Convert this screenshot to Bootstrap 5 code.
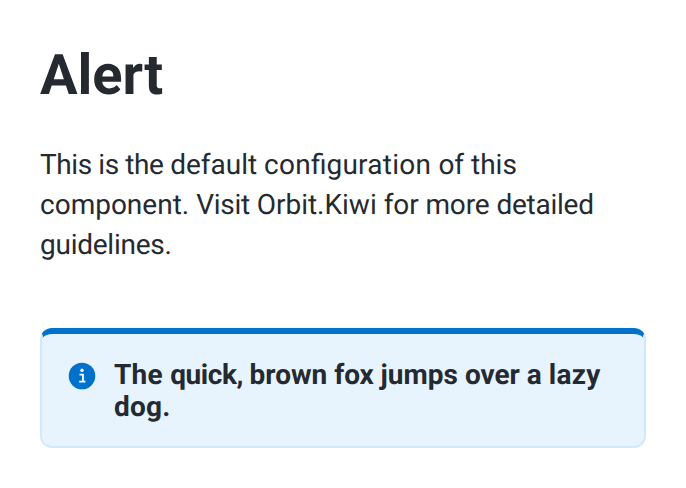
<!DOCTYPE html>
<html lang="en">
<head>
<meta charset="utf-8">
<title>Alert</title>
<link href="https://cdn.jsdelivr.net/npm/bootstrap@5.3.0/dist/css/bootstrap.min.css" rel="stylesheet">
<style>
body{font-family:Roboto,sans-serif;color:#252a31;background:#fff;text-rendering:geometricPrecision}
.page{padding:41px 40px 40px}
.page-title{font-size:56px;line-height:68px;font-weight:700;color:#252a31;margin-bottom:36px;letter-spacing:-.1px}
.intro{font-size:28px;line-height:40px;margin-bottom:63px}
.notice{background:#e8f4fd;border:2px solid #d0e9fb;border-top:6px solid #0172cb;border-radius:12px;padding:25px 26px 23px;color:#252a31}
.notice-icon{width:28px;height:28px;margin-top:3px;margin-right:18px}
.notice-text{font-size:28px;line-height:32px;font-weight:700}
/* Tracking adjustments */
.trk-xs{letter-spacing:-.4px}
.trk-s{letter-spacing:-.25px}
.trk-m{letter-spacing:-.1px}
.trk-l{letter-spacing:.25px}
</style>
</head>
<body>
<main class="page">
<h1 class="page-title">Alert</h1>
<p class="intro"><span class="d-block"><span class="trk-xs">This is the </span>default <span class="trk-l">con</span>fi<span class="trk-l">guration </span>of this</span> <span class="d-block">component. <span class="trk-s">Visit </span>Orbit.Kiwi <span class="trk-m">for more </span><span class="trk-s">detailed</span></span> <span class="d-block trk-s">guidelines.</span></p>
<div class="alert notice d-flex align-items-start mb-0" role="alert">
<svg class="notice-icon flex-shrink-0" viewBox="0 0 28 28" aria-hidden="true"><circle cx="14" cy="14" r="13.3" fill="#0172cb"/><circle cx="14" cy="8.3" r="1.7" fill="#fff"/><path d="M11.5 12.6H15v7M11.2 19.6h6.2" fill="none" stroke="#fff" stroke-width="1.8"/></svg>
<div class="notice-text"><span class="d-block"><span class="trk-l">The </span><span class="trk-xs">quick, </span>brown <span class="trk-m">fox </span>jumps over a <span class="trk-l">lazy</span></span> <span class="d-block trk-l">dog.</span></div>
</div>
</main>
<script src="https://cdn.jsdelivr.net/npm/bootstrap@5.3.0/dist/js/bootstrap.bundle.min.js"></script>
</body>
</html>
